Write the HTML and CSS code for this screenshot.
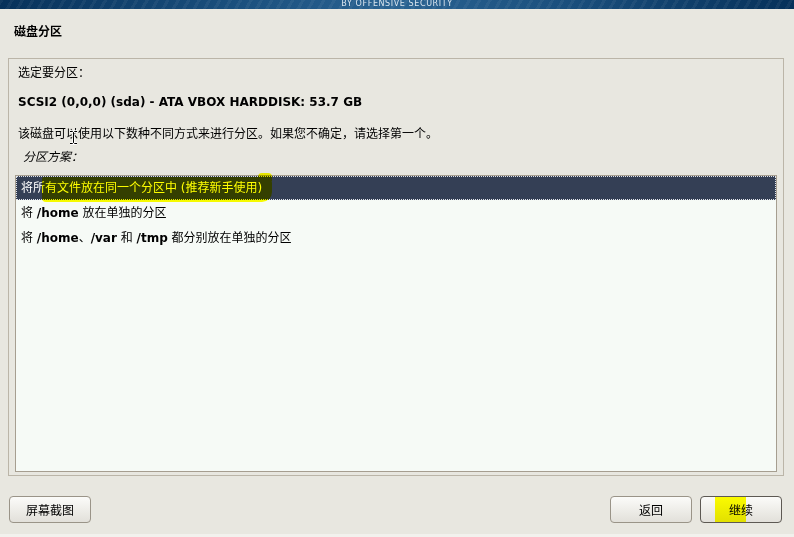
FILE: index.html
```html
<!DOCTYPE html>
<html lang="zh-CN">
<head>
<meta charset="utf-8">
<title>磁盘分区</title>
<link rel="stylesheet" href="styles.css">
</head>
<body>
<div class="page">
  <div class="banner"><span class="banner-text">BY OFFENSIVE SECURITY</span></div>
  <h1 class="title">磁盘分区</h1>
  <div class="frame">
    <div class="label cjk">选定要分区：</div>
    <div class="disk">SCSI2 (0,0,0) (sda) - ATA VBOX HARDDISK: 53.7 GB</div>
    <div class="desc cjk">该磁盘可以使用以下数种不同方式来进行分区。如果您不确定，请选择第一个。</div>
    <div class="scheme cjk">分区方案：</div>
    <div class="list">
      <div class="row selected">将所有文件放在同一个分区中 (推荐新手使用)</div>
      <div class="row">将 <b>/home</b> 放在单独的分区</div>
      <div class="row">将 <b>/home</b>、<b>/var</b> 和 <b>/tmp</b> 都分别放在单独的分区</div>
      <div class="marker marker-row"></div>
      <div class="marker marker-tip"></div>
    </div>
    <svg class="ibeam" width="9" height="15" viewBox="0 0 9 15">
      <path d="M1 1.5h2.5L4.5 2.5L5.5 1.5H8M4.5 2.5V12.5M1 13.5h2.5L4.5 12.5L5.5 13.5H8" fill="none" stroke="#fff" stroke-width="2.6"/>
      <path d="M1 1.5h2.5L4.5 2.5L5.5 1.5H8M4.5 2.5V12.5M1 13.5h2.5L4.5 12.5L5.5 13.5H8" fill="none" stroke="#000" stroke-width="1"/>
    </svg>
  </div>
  <div class="buttons">
    <button class="btn">屏幕截图</button>
    <div class="spacer"></div>
    <button class="btn">返回</button>
    <button class="btn default">继续<span class="marker marker-btn"></span></button>
  </div>
  <div class="bottom-band"></div>
</div>
</body>
</html>
```
FILE: styles.css
```css
* { box-sizing: border-box; }
html, body {
  margin: 0;
  padding: 0;
  background: #e8e7e0;
}
body {
  font-family: "DejaVu Sans", "Noto Sans CJK SC", sans-serif;
  font-size: 12px;
  color: #000;
  width: 794px;
  height: 537px;
  overflow: hidden;
}
.cjk {
  font-family: "Noto Sans CJK SC", "DejaVu Sans", sans-serif;
}
.page {
  display: flex;
  flex-direction: column;
  height: 537px;
}
.banner {
  height: 9px;
  overflow: hidden;
  display: flex;
  justify-content: center;
  align-items: flex-end;
  background:
    repeating-linear-gradient(120deg, rgba(255,255,255,0.05) 0 3px, rgba(255,255,255,0) 3px 9px),
    linear-gradient(90deg, #06315a 0%, #1b507e 30%, #2a6392 50%, #1b507e 70%, #06315a 100%);
}
.banner-text {
  font-family: "DejaVu Sans", sans-serif;
  font-size: 8px;
  line-height: 8px;
  letter-spacing: 0.6px;
  color: #d8e4ee;
  margin-bottom: 1px;
}
.title {
  margin: 0;
  padding: 15px 0 18px 14px;
  font-size: 12px;
  line-height: 16px;
  font-weight: bold;
}
.frame {
  position: relative;
  margin-left: 8px;
  width: 776px;
  border: 1px solid #bbb5a8;
  padding: 0 6px 3px 6px;
  display: flex;
  flex-direction: column;
}
.label {
  margin-top: 3px;
  padding-left: 3px;
  line-height: 20px;
  font-size: 12px;
}
.disk {
  margin-top: 10px;
  padding-left: 3px;
  line-height: 20px;
  font-weight: bold;
  font-size: 12px;
}
.desc {
  margin-top: 11px;
  padding-left: 3px;
  line-height: 20px;
  font-size: 12px;
}
.scheme {
  margin-top: 3px;
  padding-left: 8px;
  line-height: 20px;
  font-style: italic;
  font-size: 12px;
}
.list {
  position: relative;
  margin-top: 9px;
  height: 297px;
  border: 1px solid #a69e90;
  background: #f6faf6;
}
.row {
  height: 25px;
  line-height: 25px;
  padding-left: 5px;
  font-size: 12px;
}
.row.selected {
  height: 24px;
  line-height: 22px;
  background: #343f55;
  color: #fff;
  border: 1px dotted #e0e4ea;
  padding-left: 4px;
  margin-bottom: 1px;
}
.marker {
  position: absolute;
  background: #ffff00;
  mix-blend-mode: multiply;
  pointer-events: none;
}
.marker-row {
  left: 26px;
  top: 1px;
  width: 230px;
  height: 25px;
  border-radius: 2px 6px 10px 4px;
}
.marker-tip {
  left: 242px;
  top: -3px;
  width: 14px;
  height: 8px;
  border-radius: 4px 4px 0 0;
}
.ibeam {
  position: absolute;
  left: 60px;
  top: 71px;
}
.buttons {
  display: flex;
  gap: 8px;
  margin-top: 20px;
  padding: 0 12px 0 9px;
}
.spacer { flex: 1; }
.btn {
  position: relative;
  width: 82px;
  height: 27px;
  font-family: "Noto Sans CJK SC", "DejaVu Sans", sans-serif;
  font-size: 12px;
  color: #000;
  border: 1px solid #9a9488;
  border-radius: 4px;
  background: linear-gradient(#fbfbf9, #ecebe6 60%, #e2e0da);
  padding: 0;
}
.btn.default {
  border-color: #5d5953;
}
.marker-btn {
  left: 14px;
  top: 0;
  width: 31px;
  height: 25px;
}
.bottom-band {
  margin-top: auto;
  height: 3px;
  background: #f2f1ed;
}
```
